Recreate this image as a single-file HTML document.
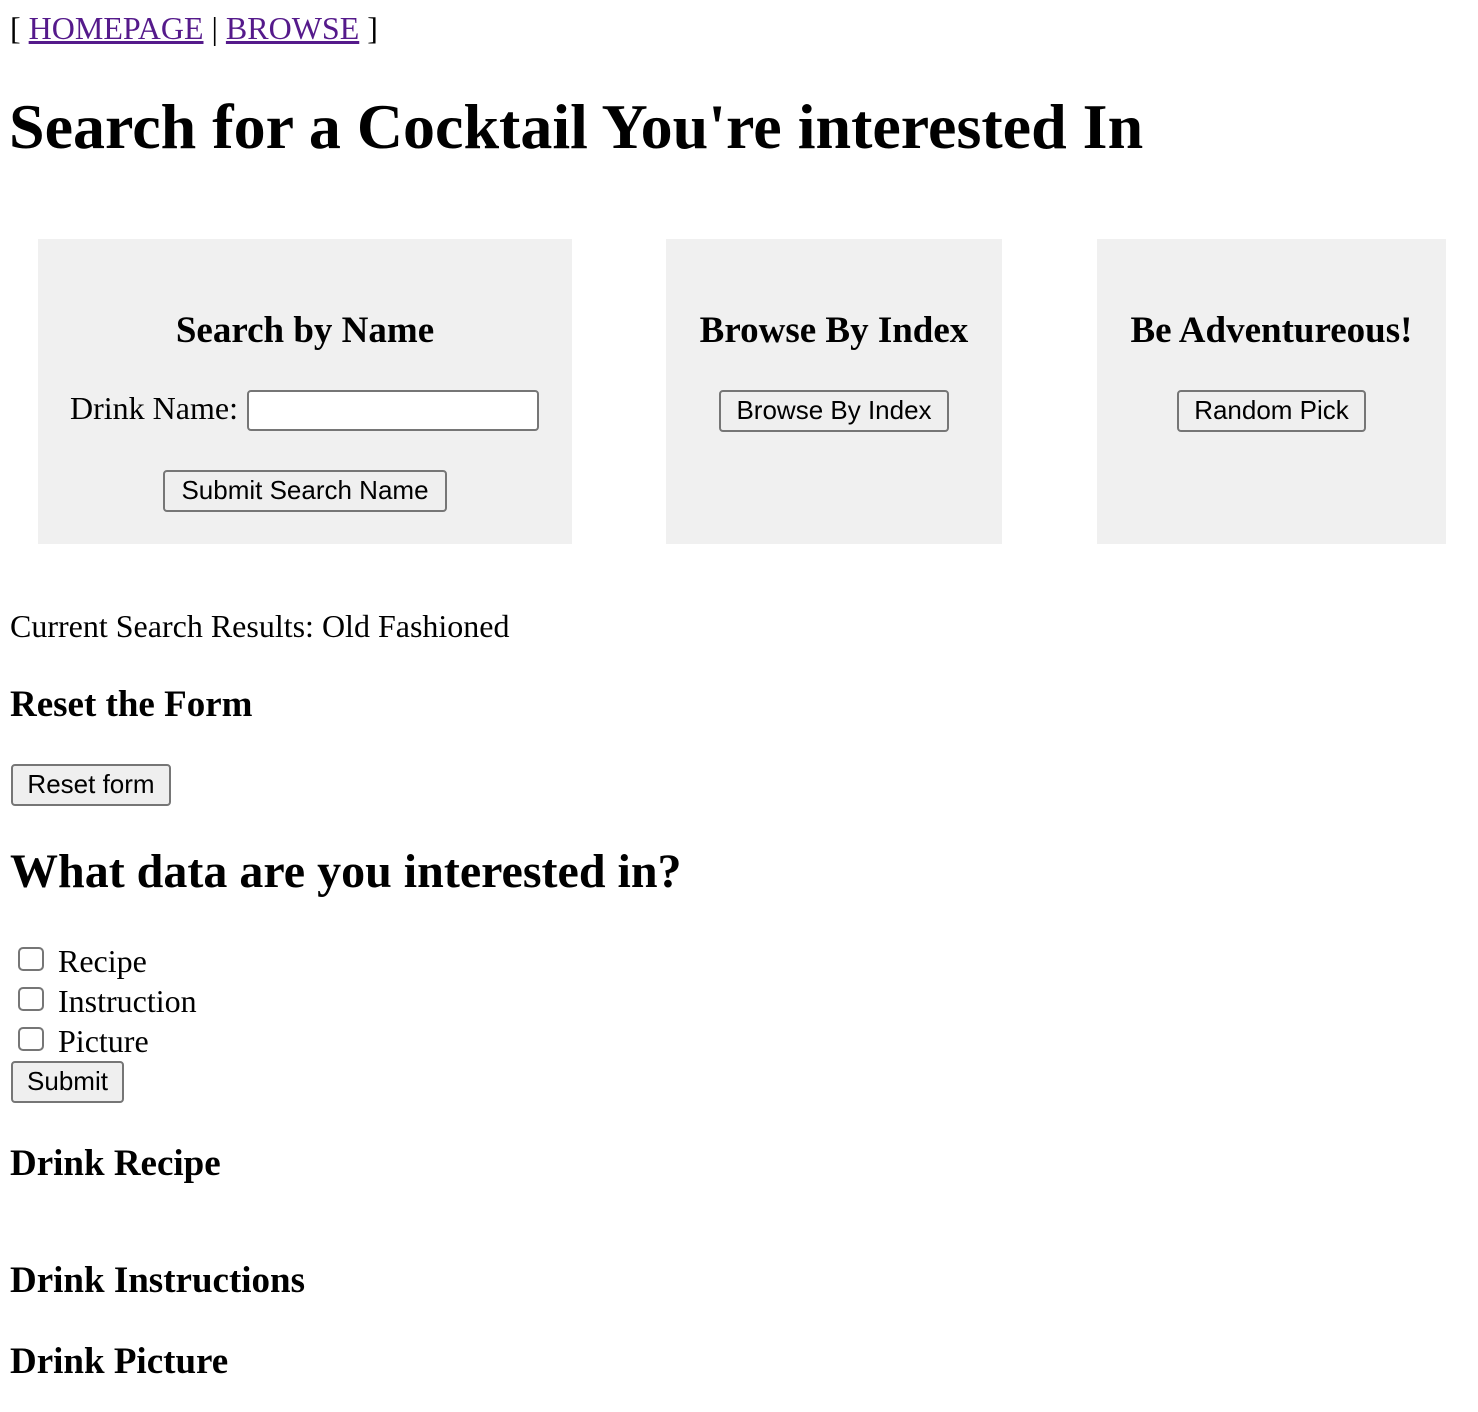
<!DOCTYPE html>
<html><head><meta charset="utf-8"><style>
body{margin:0;width:1478px;height:1412px;background:#fff;font-family:"Liberation Serif",serif;color:#000;position:relative;overflow:hidden}
.a{position:absolute;white-space:nowrap}
.t{font-size:32px;line-height:40px}
.h3{font-size:37px;font-weight:bold;line-height:44px}
a{color:#551a8b}
.box{position:absolute;background:#f0f0f0;top:239px;height:305px}
.btn{position:absolute;box-sizing:border-box;border:2px solid #767676;border-radius:4px;background:#efefef;font-family:"Liberation Sans",sans-serif;font-size:26px;text-align:center;line-height:37px;height:42px}
.cb{position:absolute;left:18px;width:26px;height:24px;box-sizing:border-box;border:2px solid #767676;border-radius:5px;background:#fff}
</style></head><body>
<div class="a t" style="left:10px;top:8px">[ <a href="#">HOMEPAGE</a> | <a href="#">BROWSE</a> ]</div>
<div class="a" style="left:9px;top:90px;font-size:64px;font-weight:bold;line-height:74px">Search for a Cocktail You're interested In</div>

<div class="box" style="left:38px;width:534px"></div>
<div class="box" style="left:666px;width:336px"></div>
<div class="box" style="left:1097px;width:349px"></div>

<div class="a h3" style="left:38px;width:534px;text-align:center;top:309px">Search by Name</div>
<div class="a h3" style="left:666px;width:336px;text-align:center;top:309px">Browse By Index</div>
<div class="a h3" style="left:1097px;width:349px;text-align:center;top:309px">Be Adventureous!</div>

<div class="a t" style="left:70px;top:388px">Drink Name:</div>
<div class="a" style="left:247px;top:390px;width:292px;height:41px;box-sizing:border-box;border:2px solid #767676;border-radius:4px;background:#fff"></div>
<div class="btn" style="left:163px;top:470px;width:284px">Submit Search Name</div>
<div class="btn" style="left:719px;top:390px;width:230px">Browse By Index</div>
<div class="btn" style="left:1177px;top:390px;width:189px">Random Pick</div>

<div class="a t" style="left:10px;top:606px">Current Search Results: Old Fashioned</div>
<div class="a h3" style="left:10px;top:683px">Reset the Form</div>
<div class="btn" style="left:11px;top:764px;width:160px">Reset form</div>
<div class="a" style="left:10px;top:844px;font-size:48px;font-weight:bold;line-height:56px">What data are you interested in?</div>

<div class="cb" style="top:947px"></div>
<div class="cb" style="top:987px"></div>
<div class="cb" style="top:1027px"></div>
<div class="a t" style="left:58px;top:941px">Recipe</div>
<div class="a t" style="left:58px;top:981px">Instruction</div>
<div class="a t" style="left:58px;top:1021px">Picture</div>
<div class="btn" style="left:11px;top:1061px;width:113px">Submit</div>

<div class="a h3" style="left:10px;top:1142px">Drink Recipe</div>
<div class="a h3" style="left:10px;top:1259px">Drink Instructions</div>
<div class="a h3" style="left:10px;top:1340px">Drink Picture</div>
</body></html>
